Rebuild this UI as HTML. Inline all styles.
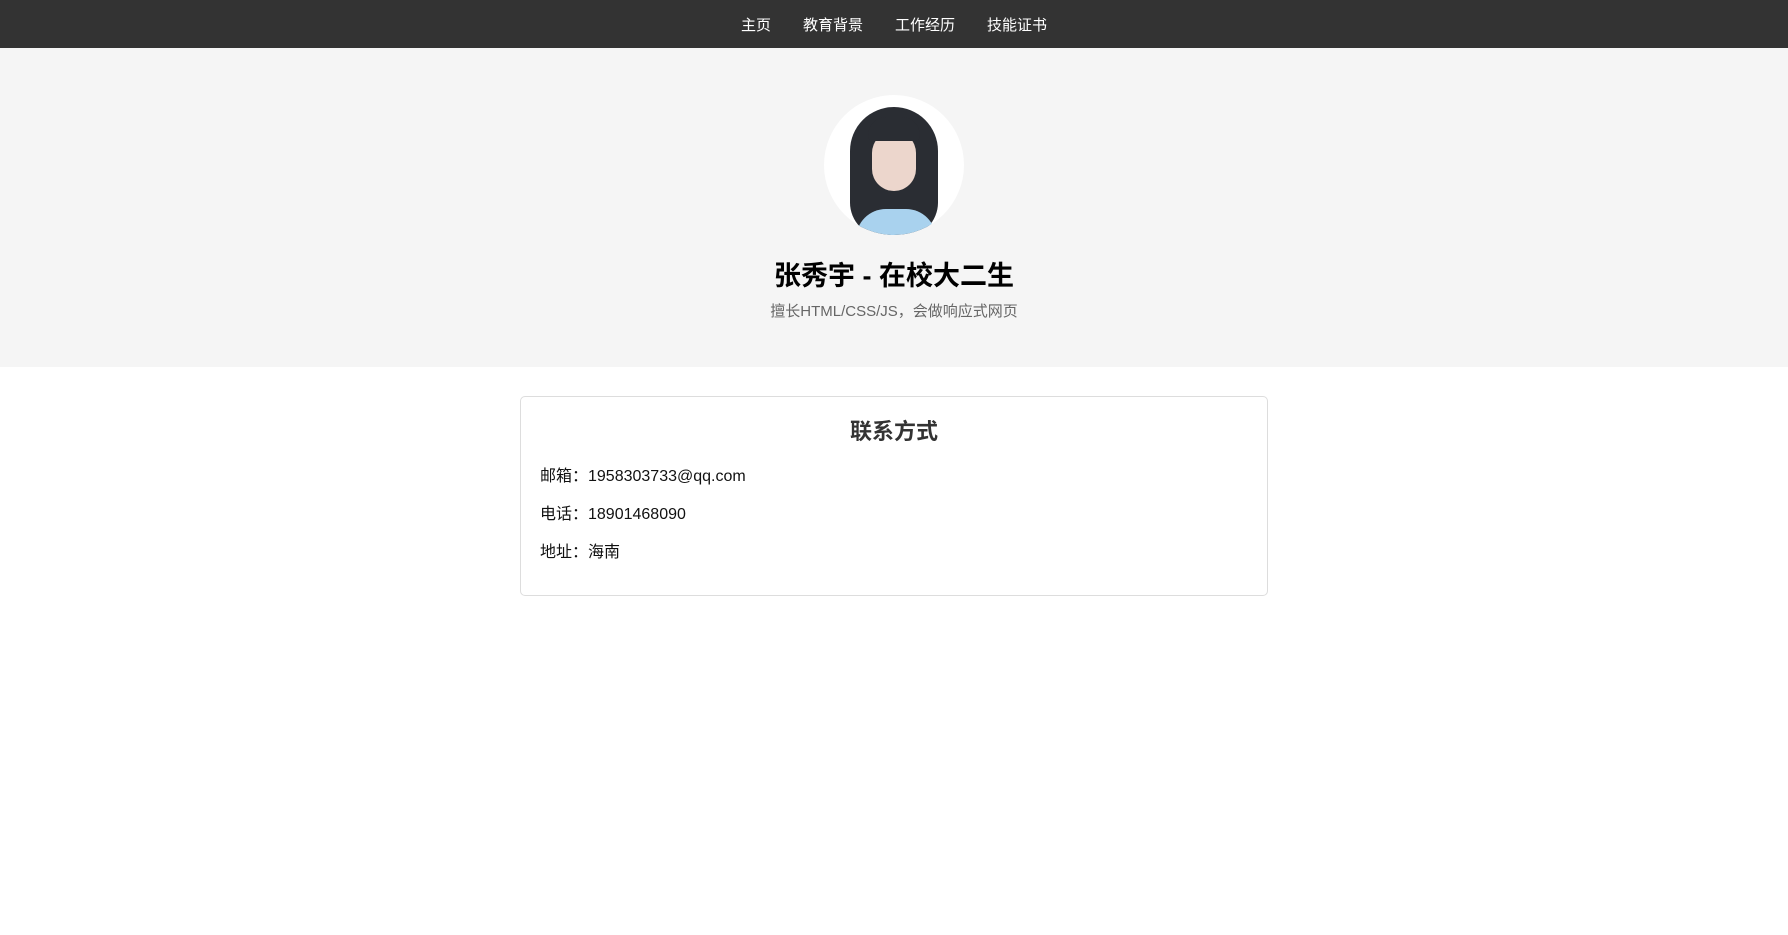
<!DOCTYPE html>
<html><head><meta charset="utf-8"><style>
*{margin:0;padding:0;box-sizing:border-box}
body{width:1788px;height:935px;background:#fff;font-family:"Liberation Sans","Noto Sans CJK SC",sans-serif;overflow:hidden}
nav{height:48px;background:#333;display:flex;justify-content:center;align-items:center;gap:32px;padding-left:0}
nav a{color:#fff;font-size:15px;text-decoration:none}
header{background:#f5f5f5;height:319px;text-align:center;padding-top:47px}
.av{width:140px;height:140px;border-radius:50%;margin:0 auto;background:#fff;position:relative;overflow:hidden}
.hair{position:absolute;left:26px;top:12px;width:88px;height:130px;background:#2a2d33;border-radius:46px 46px 36px 36px}
.shirt{position:absolute;left:32px;top:114px;width:80px;height:40px;background:#a9d2ee;border-radius:30px 30px 0 0}
.face{position:absolute;left:48px;top:36px;width:44px;height:60px;background:#ecd6cc;border-radius:22px}
.bang{position:absolute;left:44px;top:22px;width:52px;height:24px;background:#2a2d33;border-radius:26px 26px 8px 8px}
h1{font-size:27px;margin-top:24px;line-height:34px;color:#000}
.sub{color:#666;font-size:15px;margin-top:7px}
.card{width:748px;margin:29px auto 0;border:1px solid #ddd;border-radius:5px;padding:20px 19px 14px;height:200px}
.card h2{text-align:center;font-size:22px;color:#333;line-height:30px;margin-bottom:20px}
.card p{font-size:16px;line-height:20px;margin-bottom:18px;color:#111}
</style></head><body>
<nav><a>主页</a><a>教育背景</a><a>工作经历</a><a>技能证书</a></nav>
<header>
<div class="av"><div class="hair"></div><div class="shirt"></div><div class="face"></div><div class="bang"></div></div>
<h1>张秀宇 - 在校大二生</h1>
<div class="sub">擅长HTML/CSS/JS，会做响应式网页</div>
</header>
<div class="card">
<h2>联系方式</h2>
<p>邮箱：1958303733@qq.com</p>
<p>电话：18901468090</p>
<p>地址：海南</p>
</div>
</body></html>
